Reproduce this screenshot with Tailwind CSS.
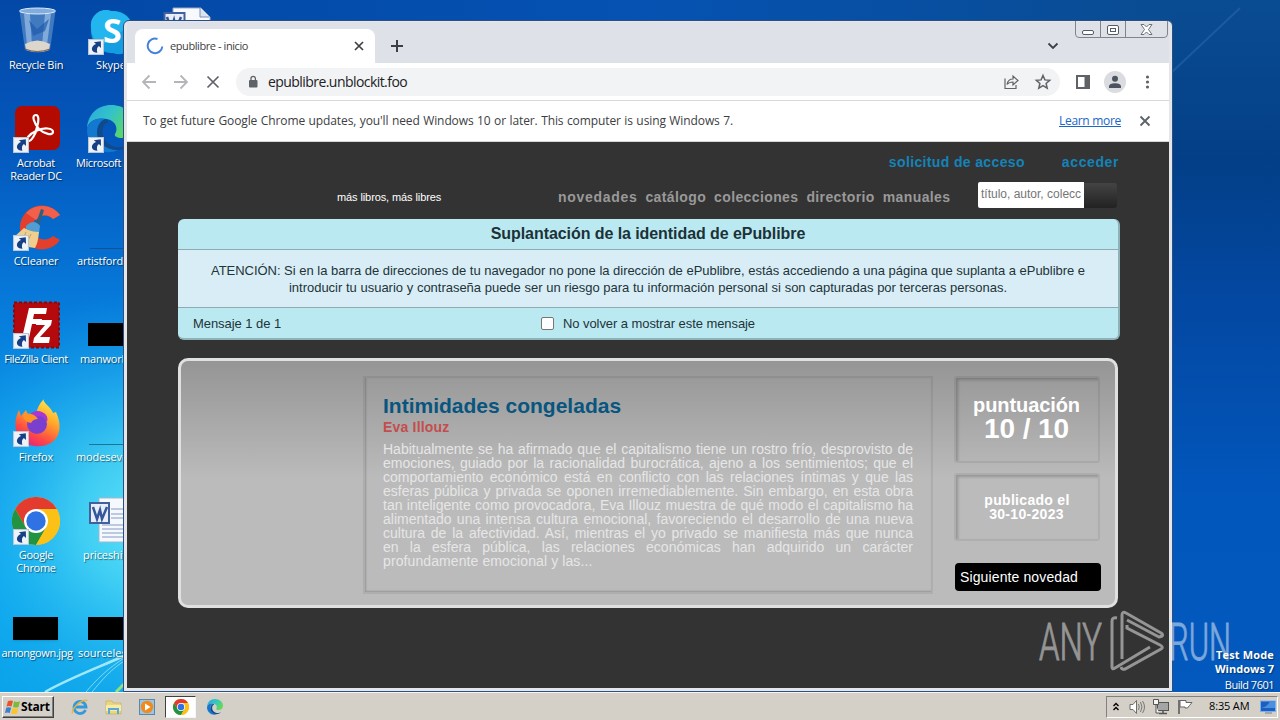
<!DOCTYPE html>
<html lang="es">

<head>
    <meta charset="UTF-8" />
    <meta name="viewport" content="width=device-width, initial-scale=1.0" />
    <title>epublibre - inicio</title>

    <!-- Tailwind CSS -->
    <script src="https://cdn.jsdelivr.net/npm/@tailwindcss/browser@4"></script>
</head>

<body class="overflow-hidden">

    <!-- Shared symbols -->
    <svg class="absolute size-0">
        <defs>
            <linearGradient id="edgeTop" x1="0" y1="0" x2="1" y2=".5">
                <stop offset="0" stop-color="#2ba5df" />
                <stop offset=".5" stop-color="#33c3c9" />
                <stop offset="1" stop-color="#61d95a" />
            </linearGradient>
        </defs>
        <symbol id="shortcut" viewBox="0 0 15 15">
            <rect x=".5" y=".5" width="14" height="14" fill="#eef3f8" stroke="#b9c6d6" />
            <path d="M5.500 3 12 2l.2 6.500-2-2C8.300 8 8 10 8.800 12.800 5 13 2.800 10.500 4 7.800 4.600 6.300 6 5.200 7.600 4.600z" fill="#163f86" />
        </symbol>
        <symbol id="chrome" viewBox="0 0 48 48">
            <circle cx="24" cy="24" r="24" fill="#fbc116" />
            <path d="M24 24 13.600 30 3.200 12A24 24 0 0 1 44.800 12H24z" fill="#e33b2e" />
            <path d="M24 48A24 24 0 0 1 3.200 12l10.400 18L24 36l10.400-6z" fill="#229342" />
            <path d="M24 48 34.400 30A12 12 0 0 0 34.400 18L33 12h11.800A24 24 0 0 1 24 48z" fill="#fbc116" />
            <circle cx="24" cy="24" r="12" fill="#fff" />
            <circle cx="24" cy="24" r="9.700" fill="#2f72e4" />
        </symbol>
        <symbol id="edge" viewBox="0 0 48 48">
            <path d="M0 23C1 9 11 0 24 0c14 0 24 9 24 20 0 8-6 13-13 13-5 0-8-2-7-4 3-4 2-13-8-15C10 12 2 16 0 23z" fill="url(#edgeTop)" />
            <path d="M0 25c1-9 9-13 18-11-7 3-9 10-7 17 3 9 11 14 20 14C17 52 0 42 0 25z" fill="#1378cf" />
            <path d="M18 19c-6 8-1 21 11 23 7 1 13-2 16-7-4 6-9 10-14 10-12 0-20-7-21-16 0-7 3-12 8-15 3 1 5 3 0 5z" fill="#114a8b" />
        </symbol>
    </svg>

    <div class="relative w-[1280px] h-[720px] overflow-hidden flex flex-col font-['Open_Sans','Noto_Sans',sans-serif]">

        <!-- Wallpaper -->
        <svg class="absolute inset-0" width="1280" height="720">
            <defs>
                <linearGradient id="wallTop" x1="0" y1="0" x2="1" y2="0">
                    <stop offset="0" stop-color="#0349a8" />
                    <stop offset=".5" stop-color="#0552b2" />
                    <stop offset="1" stop-color="#0a4c92" />
                </linearGradient>
                <linearGradient id="wallLeft" x1="0" y1="0" x2="0" y2="1">
                    <stop offset="0" stop-color="#0348a6" />
                    <stop offset=".2" stop-color="#0457bc" />
                    <stop offset=".4" stop-color="#0677d8" />
                    <stop offset=".6" stop-color="#0a94e8" />
                    <stop offset=".8" stop-color="#08a4ee" />
                    <stop offset="1" stop-color="#0ba3e9" />
                </linearGradient>
                <linearGradient id="wallRight" x1="0" y1="0" x2="0" y2="1">
                    <stop offset="0" stop-color="#0a4c92" />
                    <stop offset=".22" stop-color="#033f87" />
                    <stop offset=".4" stop-color="#0347a0" />
                    <stop offset=".7" stop-color="#0257bd" />
                    <stop offset="1" stop-color="#0359bd" />
                </linearGradient>
                <radialGradient id="glow" cx="150" cy="520" r="230" gradientUnits="userSpaceOnUse">
                    <stop offset="0" stop-color="#5fe4f8" />
                    <stop offset=".3" stop-color="#4dd9f5" stop-opacity=".8" />
                    <stop offset="1" stop-color="#14a8ef" stop-opacity="0" />
                </radialGradient>
            </defs>
            <rect width="700" height="720" fill="url(#wallLeft)" />
            <rect x="500" width="780" height="720" fill="url(#wallRight)" />
            <rect x="124" width="1048" height="40" fill="url(#wallTop)" />
            <rect width="330" height="720" fill="url(#glow)" />
            <path d="M45 692C72 677 100 667 126 655" stroke="#b9f3ff" stroke-width="2.500" fill="none" opacity=".85" />
            <path d="M86 692C96 680 108 668 126 657M92 692C102 680 112 668 126 660" stroke="#a5edf8" fill="none" opacity=".7" />
            <path d="M116 692 126 682" stroke="#8fe27c" stroke-width="3" />
            <path d="M1172 72 1240 8" stroke="#2f6cae" stroke-width="2" opacity=".5" />
        </svg>

        <!-- Desktop icons -->
        <div class="absolute inset-0 text-[11px] leading-[13px] text-white text-center [text-shadow:1px_1px_1px_#0008]">
            <div class="absolute left-0 top-[6px] w-[72px] flex flex-col items-center">
                <svg class="h-[50px] w-[48px]" viewBox="0 0 48 50">
                    <path d="M7.500 5h36L38 44q-12 5-25 0z" fill="#4d83c4" opacity=".85" />
                    <path d="M12 8h6l2 32h-5zM33 8h6l-4 31h-5z" fill="#a9c9ea" opacity=".6" />
                    <path d="m17 14 8 9 12-10-4 12-12 5z" fill="#1d58aa" opacity=".65" />
                    <path d="M13 38q12-7 25 0l-1 6q-11 4-23 0z" fill="#ddd6cd" />
                    <path d="M13 43q12 5 25 0" stroke="#7a5b44" fill="none" />
                    <ellipse cx="25.500" cy="5" rx="18" ry="3" fill="#81aede" stroke="#dfedf9" />
                </svg>
                <p class="mt-[2px] tracking-[-.3px]">Recycle Bin</p>
            </div>
            <div class="absolute left-0 top-[105px] w-[72px] flex flex-col items-center">
                <div class="relative h-[48px] w-[48px]">
                    <svg viewBox="0 0 48 48">
                        <rect x="3" y="1" width="45" height="44" rx="7" fill="#b30b00" />
                        <path d="M24 10c-5 0-2 8 3 14 5 5 14 7 14 3s-9-5-17-1c-7 3-11 9-8 10s8-7 9-14c2-6 2-12-1-12z" fill="none" stroke="#fff" stroke-width="2.200" />
                    </svg>
                    <svg class="absolute left-[1px] bottom-0 size-[16px]"><use href="#shortcut" /></svg>
                </div>
                <p class="mt-[3px] tracking-[-.3px]">Acrobat<br>Reader DC</p>
            </div>
            <div class="absolute left-0 top-[203px] w-[72px] flex flex-col items-center">
                <div class="relative h-[48px] w-[48px]">
                    <svg viewBox="0 0 48 48">
                        <path d="M48 12A22 22 0 1 0 48 37L41 33A12 12 0 1 1 41 16z" fill="#e2402c" />
                        <path d="M48 12A22 22 0 0 0 14 10L24 17Q33 8 41 16z" fill="#f0604a" />
                        <path d="M29 6l3 1-6 20-4-1z" fill="#2f607f" />
                        <path d="M14 23q8-8 14 0l-1 7-13-3z" fill="#4f9fd4" />
                        <path d="M12 25q7 4 15 4-1 11-4 16Q9 44 2 34z" fill="#f0cf8e" />
                        <path d="m14 29-4 9m9-7-5 11" stroke="#c79d5c" />
                    </svg>
                    <svg class="absolute left-[1px] bottom-0 size-[16px]"><use href="#shortcut" /></svg>
                </div>
                <p class="mt-[3px] tracking-[-.2px]">CCleaner</p>
            </div>
            <div class="absolute left-0 top-[301px] w-[72px] flex flex-col items-center">
                <div class="relative h-[48px] w-[48px]">
                    <svg viewBox="0 0 48 48">
                        <rect x="2" y="1.500" width="45" height="45" fill="#b40a0d" stroke="#8b0708" stroke-width="2" stroke-dasharray="3 2" />
                        <path d="M17 7h18l-1 6H22l-1 5h9l-1 5h-9l-3 14h-7z" fill="#fff" />
                        <path d="M25 19h15l-1 5-11 12h10l-1 6H21l1-5 11-13h-9z" fill="#fff" />
                    </svg>
                    <svg class="absolute left-[1px] bottom-0 size-[16px]"><use href="#shortcut" /></svg>
                </div>
                <p class="mt-[3px] tracking-[-.42px] whitespace-nowrap">FileZilla Client</p>
            </div>
            <div class="absolute left-0 top-[399px] w-[72px] flex flex-col items-center">
                <div class="relative h-[48px] w-[48px]">
                    <svg viewBox="0 0 48 48">
                        <linearGradient id="fox" x1=".8" y1="0" x2=".3" y2="1">
                            <stop offset="0" stop-color="#fff04f" />
                            <stop offset=".4" stop-color="#ffa52a" />
                            <stop offset=".75" stop-color="#ff4a43" />
                            <stop offset="1" stop-color="#e5227c" />
                        </linearGradient>
                        <path d="M31 0c2 6 8 8 10 14l3-1c4 9 5 17 1 25-8 12-27 12-37 2-6-8-6-19-1-29l2 6 5-6 2 5 8-1c1-5 3-10 7-14z" fill="url(#fox)" />
                        <circle cx="25" cy="25" r="10" fill="#7b3fd0" />
                        <path d="M17 16q6-6 13-3 7 3 5 10-4-8-11-5z" fill="#a937d2" />
                        <path d="M11 15q10-2 15 5-5 0-7 4-8-1-8-9z" fill="#ff9424" />
                    </svg>
                    <svg class="absolute left-[1px] bottom-0 size-[16px]"><use href="#shortcut" /></svg>
                </div>
                <p class="mt-[3px] tracking-[-.1px]">Firefox</p>
            </div>
            <div class="absolute left-0 top-[497px] w-[72px] flex flex-col items-center">
                <div class="relative h-[48px] w-[48px]">
                    <svg class="size-[48px]"><use href="#chrome" /></svg>
                    <svg class="absolute left-[1px] bottom-0 size-[16px]"><use href="#shortcut" /></svg>
                </div>
                <p class="mt-[3px] tracking-[-.3px]">Google<br>Chrome</p>
            </div>
            <div class="absolute left-0 top-[617px] w-[74px] flex flex-col items-center">
                <div class="w-[45px] h-[23px] bg-black -ml-[3px] shadow"></div>
                <p class="mt-[6px] tracking-[-.4px]">amongown.jpg</p>
            </div>

            <div class="absolute left-[87px] top-[9px] w-[48px] text-left">
                <div class="relative h-[46px]">
                    <svg class="size-[48px]" viewBox="0 0 48 48">
                        <path d="M4 18A15 15 0 0 1 24 2c13-1 24 8 22 24a15 15 0 0 1-20 18C13 44 3 34 4 18z" fill="#149ee2" />
                        <path d="M4 18A15 15 0 0 1 24 2c10 0 18 5 21 13L14 37Q4 30 4 18z" fill="#22b5ee" />
                    </svg>
                    <span class="absolute left-[16px] top-[3px] text-[34px] leading-[36px] font-bold [text-shadow:none]">S</span>
                    <svg class="absolute left-[1px] bottom-0 size-[16px]"><use href="#shortcut" /></svg>
                </div>
                <p class="mt-[3px] ml-[9px] tracking-[-.1px]">Skype</p>
            </div>
            <div class="absolute left-[76px] top-[105px] w-[60px] text-left">
                <div class="relative h-[48px] ml-[11px]">
                    <svg class="size-[48px]"><use href="#edge" /></svg>
                    <svg class="absolute left-[1px] bottom-0 size-[16px]"><use href="#shortcut" /></svg>
                </div>
                <p class="mt-[3px] tracking-[-.4px]">Microsoft</p>
            </div>
            <div class="absolute left-[77px] top-[248px] w-[60px] text-left">
                <div class="h-px ml-[13px] bg-[#0b558e]"></div>
                <p class="mt-[5px] tracking-[-.2px]">artistford</p>
            </div>
            <div class="absolute left-[80px] top-[323px] w-[60px] text-left">
                <div class="h-[23px] ml-[8px] bg-black"></div>
                <p class="mt-[6px] tracking-[-.2px]">manwork</p>
            </div>
            <div class="absolute left-[76px] top-[444px] w-[60px] text-left">
                <div class="h-px ml-[13px] bg-[#1a7595]"></div>
                <p class="mt-[5px] tracking-[-.1px]">modeseve</p>
            </div>
            <div class="absolute left-[83px] top-[497px] w-[60px] text-left">
                <svg class="ml-[6px] w-[48px] h-[48px]" viewBox="0 0 48 48">
                    <path d="M10 1h36v44H10z" fill="#f5f8fd" stroke="#a8b5cb" />
                    <path d="M22 12h20M22 17h20M22 21h20M13 28h30M13 32h30M13 36h30M13 40h30" stroke="#8599c4" />
                    <rect x="1" y="6" width="19" height="20" fill="#e7eefa" stroke="#40609f" stroke-width="2" />
                    <path d="m4 10 4 12 3-9 2 9 5-12" fill="none" stroke="#34569b" stroke-width="2.500" />
                </svg>
                <p class="mt-[3px] tracking-[-.1px]">priceshit</p>
            </div>
            <div class="absolute left-[78px] top-[617px] w-[60px] text-left">
                <div class="h-[23px] ml-[10px] bg-black"></div>
                <p class="mt-[6px]">sourceles</p>
            </div>
            <svg class="absolute left-[163px] top-[7px] size-[48px]" viewBox="0 0 48 48">
                <path d="M10 1h28l9 9v37H10z" fill="#f7f9fd" stroke="#98a9c8" />
                <path d="M37 1v9h9" fill="#d9e2f2" stroke="#7c90b8" />
                <rect x="1.500" y="6" width="20" height="20" fill="#e7eefa" stroke="#40609f" stroke-width="2" />
                <path d="m4 10 4 12 3-9 2 9 5-12" fill="none" stroke="#34569b" stroke-width="2.500" />
            </svg>
        </div>

        <!-- Browser window -->
        <div class="absolute left-[123px] top-[20px] w-[1050px] h-[672px] rounded-t-[6px] border border-[#2a4f80] bg-[#e4e6ea] px-[3px] pt-px pb-[3px] flex flex-col overflow-hidden">

            <!-- Tab strip -->
            <div class="relative h-[41px] shrink-0 bg-[#dee1e8] flex items-end">
                <div class="ml-[8px] w-[240px] h-[34px] bg-white rounded-t-[8px] flex items-center pl-[11px] pr-[9px]">
                    <svg class="size-[18px]" viewBox="0 0 18 18">
                        <path d="M11.500 2A7.300 7.300 0 1 0 16.300 9.500" fill="none" stroke="#4682dc" stroke-width="2" />
                    </svg>
                    <span class="ml-[6px] text-[11px] text-[#3c4043] tracking-[-.42px] grow">epublibre - inicio</span>
                    <svg class="size-[14px]" viewBox="0 0 14 14"><path d="m3 3 8 8m0-8-8 8" stroke="#3c4043" stroke-width="1.700" /></svg>
                </div>
                <svg class="ml-[15px] mb-[10px] size-[14px]" viewBox="0 0 14 14"><path d="M7 1v12M1 7h12" stroke="#3c4043" stroke-width="2" /></svg>
                <svg class="absolute left-[920px] top-[18px] size-[12px]" viewBox="0 0 12 12"><path d="m1.500 3.500 4.500 4.500 4.500-4.500" fill="none" stroke="#3c4043" stroke-width="1.800" /></svg>
                <div class="absolute left-[948px] -top-[2px] w-[93px] h-[18px] border border-[#80858d] rounded-b-[4px] flex">
                    <div class="w-[25px] border-r border-[#80858d] grid place-items-center pt-[6px]">
                        <div class="w-[12px] h-[5px] rounded-[2px] border border-[#555c66] bg-white"></div>
                    </div>
                    <div class="w-[25px] border-r border-[#80858d] grid place-items-center pt-px">
                        <div class="w-[12px] h-[10px] rounded-[2px] border border-[#555c66] bg-white grid place-items-center">
                            <div class="w-[6px] h-[4px] border border-[#555c66]"></div>
                        </div>
                    </div>
                    <div class="grow grid place-items-center">
                        <svg width="13" height="11" viewBox="0 0 13 11"><path d="M1 .5h3L6.500 3 9 .5h3L8.500 5.500 12 10.500H9L6.500 8 4 10.500H1L4.500 5.500z" fill="#fff" stroke="#6c727b" /></svg>
                    </div>
                </div>
            </div>

            <!-- Toolbar -->
            <div class="h-[37px] shrink-0 bg-white flex items-center text-[#5f6368]">
                <svg class="ml-[14px] size-[16px]" viewBox="0 0 16 16"><path d="M15 8H2m6.500-6.500L2 8l6.500 6.500" fill="none" stroke="#b4b6b9" stroke-width="1.800" /></svg>
                <svg class="ml-[16px] size-[16px]" viewBox="0 0 16 16"><path d="M1 8h13M7.500 1.500 14 8l-6.500 6.500" fill="none" stroke="#b4b6b9" stroke-width="1.800" /></svg>
                <svg class="ml-[16px] size-[16px]" viewBox="0 0 16 16"><path d="m2.500 2.500 11 11m0-11-11 11" stroke="#5f6368" stroke-width="1.700" /></svg>
                <div class="ml-[15px] w-[824px] h-[28px] rounded-full bg-[#f1f3f4] flex items-center pl-[11px] pr-[8px]">
                    <svg class="w-[12px] h-[14px]" viewBox="0 0 12 14">
                        <rect x="2" y="5" width="8.500" height="7.500" rx="1" fill="#5f6368" />
                        <path d="M4 5.500V3.500a2.200 2.200 0 0 1 4.400 0v2" fill="none" stroke="#5f6368" stroke-width="1.300" />
                    </svg>
                    <span class="ml-[9px] grow text-[14px] leading-[18px] tracking-[-.56px] text-[#202124]">epublibre.unblockit.foo</span>
                    <svg class="size-[18px]" viewBox="0 0 18 18"><path d="M3 5.500v10h11V12M5 11.500q1-5.500 6-5.500V3l5 4.500-5 4.500V9q-4 0-6 2.500z" fill="none" stroke="#5f6368" stroke-width="1.200" /></svg>
                    <svg class="ml-[14px] size-[18px]" viewBox="0 0 18 18"><path d="m9 2.500 1.900 4.400 4.800.4-3.600 3.200 1.100 4.700L9 12.700l-4.200 2.500 1.100-4.700-3.600-3.200 4.800-.4z" fill="none" stroke="#5f6368" stroke-width="1.500" /></svg>
                </div>
                <svg class="ml-[16px] size-[14px]" viewBox="0 0 14 14"><path d="M0 0h14v14H0zM2 2v10h6.500V2z" fill="#5f6368" fill-rule="evenodd" /></svg>
                <div class="ml-[14px] size-[22px] rounded-full bg-[#dadce0] grid place-items-center">
                    <svg class="size-[14px]" viewBox="0 0 14 14"><circle cx="7" cy="3.800" r="3" fill="#4c5462" /><path d="M1 13v-1.500C1 9 4.500 8.300 7 8.300s6 .7 6 3.200V13z" fill="#4c5462" /></svg>
                </div>
                <svg class="ml-[18px] w-[7px] h-[14px]" viewBox="0 0 7 14" fill="#5f6368"><circle cx="3.500" cy="2" r="1.600" /><circle cx="3.500" cy="7" r="1.600" /><circle cx="3.500" cy="12" r="1.600" /></svg>
            </div>

            <!-- Infobar -->
            <div class="h-[42px] shrink-0 bg-white border-y border-[#d5d7da] flex items-center pl-[16px] text-[12px] text-[#3c4043]">
                <span class="w-[590px] whitespace-nowrap tracking-[-.1px] [text-align-last:justify]">To get future Google Chrome updates, you'll need Windows 10 or later. This computer is using Windows 7.</span>
                <a class="ml-[326px] w-[62px] whitespace-nowrap underline text-[#1a66c8] tracking-[-.3px]">Learn more</a>
                <svg class="ml-[18px] size-[12px]" viewBox="0 0 12 12"><path d="m1.500 1.500 9 9m0-9-9 9" stroke="#5f6368" stroke-width="1.900" /></svg>
            </div>

            <!-- Page -->
            <main class="grow bg-[#333] pl-[51px] font-['Liberation_Sans',Arial,sans-serif]">
                <header class="w-[942px]">
                    <div class="h-[38px] pt-[11px] flex justify-end gap-[37px] pr-px text-[14px] leading-[18px] font-bold text-[#1583b8]">
                        <a class="tracking-[.36px]">solicitud de acceso</a>
                        <a class="tracking-[.6px]">acceder</a>
                    </div>
                    <div class="h-[39px] flex items-start">
                        <p class="ml-[159px] mt-[10px] w-[221px] text-[11px] leading-[14px] text-white tracking-[-.1px]">más libros, más libres</p>
                        <nav class="mt-[8px] w-[420px] flex gap-[8px] text-[14px] leading-[18px] font-bold text-[#999] tracking-[.38px]">
                            <a class="tracking-[.7px]">novedades</a>
                            <a>catálogo</a>
                            <a>colecciones</a>
                            <a>directorio</a>
                            <a>manuales</a>
                        </nav>
                        <div class="mt-[2px] flex">
                            <div class="w-[106px] h-[26px] rounded-l-[2px] bg-white pl-[3px] text-[12px] leading-[25px] text-[#757575] overflow-hidden whitespace-nowrap">título, autor, colecc</div>
                            <div class="w-[33px] h-[25px] mt-px rounded-r-[3px] bg-linear-to-b from-[#444] to-[#222]"></div>
                        </div>
                    </div>
                </header>

                <section class="w-[942px] h-[121px] rounded-[6px] overflow-hidden bg-[#bbe9f2] border-b-2 border-r-2 border-[#8fb2b9] text-[#223438]">
                    <h2 class="h-[31px] border-b border-[#8fabb2] text-center text-[16px] leading-[29px] font-bold text-[#1c3237] tracking-[-.07px]">Suplantación de la identidad de ePublibre</h2>
                    <div class="h-[58px] pt-[12px] bg-[#d9edf6] border-b border-[#8fabb2] text-[13px] leading-[17px]">
                        <p class="ml-[33px] w-[874px] whitespace-nowrap tracking-[-.04px] [text-align-last:justify]">ATENCIÓN: Si en la barra de direcciones de tu navegador no pone la dirección de ePublibre, estás accediendo a una página que suplanta a ePublibre e</p>
                        <p class="ml-[111px] w-[718px] whitespace-nowrap tracking-[-.02px] [text-align-last:justify]">introducir tu usuario y contraseña puede ser un riesgo para tu información personal si son capturadas por terceras personas.</p>
                    </div>
                    <div class="h-[31px] flex items-center pl-[15px] text-[13px]">
                        <span class="w-[348px] tracking-[-.06px]">Mensaje 1 de 1</span>
                        <span class="size-[13px] rounded-[2px] bg-white border border-[#767676]"></span>
                        <span class="ml-[9px] w-[192px] whitespace-nowrap tracking-[-.08px] [text-align-last:justify]">No volver a mostrar este mensaje</span>
                    </div>
                </section>

                <section class="mt-[18px] w-[940px] h-[250px] rounded-[10px] border-[3px] border-[#e0e0e0] bg-linear-to-b from-[#959595] to-[#bbb] to-[48%] flex">
                    <article class="ml-[182px] mt-[15px] w-[570px] h-[218px] px-[18px] pt-[17px] border-[2px] border-[#0001] shadow-[inset_1px_-1px_2px_#0003]">
                        <h1 class="text-[21px] leading-[22px] font-bold text-[#08557f]">Intimidades congeladas</h1>
                        <h2 class="text-[14px] leading-[20px] font-bold text-[#c44d4d] tracking-[.2px]">Eva Illouz</h2>
                        <div class="mt-[5px] w-[530px] text-[14px] leading-[14px] text-[#e6e6e6] whitespace-nowrap [text-align-last:justify]">
                            <p>Habitualmente se ha afirmado que el capitalismo tiene un rostro frío, desprovisto de</p>
                            <p>emociones, guiado por la racionalidad burocrática, ajeno a los sentimientos; que el</p>
                            <p>comportamiento económico está en conflicto con las relaciones íntimas y que las</p>
                            <p>esferas pública y privada se oponen irremediablemente. Sin embargo, en esta obra</p>
                            <p>tan inteligente como provocadora, Eva Illouz muestra de qué modo el capitalismo ha</p>
                            <p>alimentado una intensa cultura emocional, favoreciendo el desarrollo de una nueva</p>
                            <p>cultura de la afectividad. Así, mientras el yo privado se manifiesta más que nunca</p>
                            <p>en la esfera pública, las relaciones económicas han adquirido un carácter</p>
                            <p class="[text-align-last:left] tracking-[.1px]">profundamente emocional y las...</p>
                        </div>
                    </article>
                    <aside class="ml-[21px] mt-[15px] w-[147px] text-center text-white font-bold">
                        <div class="w-[146px] h-[87px] pt-[16px] pr-[1px] border-[2px] border-[#0001] rounded-[3px] shadow-[inset_2px_2px_3px_#0003]">
                            <p class="text-[20px] leading-[22px] tracking-[-.1px]">puntuación</p>
                            <p class="text-[28px] leading-[25px] tracking-[-.1px]">10 / 10</p>
                        </div>
                        <div class="mt-[10px] w-[146px] h-[68px] pt-[18px] border-[2px] border-[#0001] rounded-[3px] shadow-[inset_2px_2px_3px_#0003] text-[14px] leading-[14px]">
                            <p class="tracking-[.3px]">publicado el</p>
                            <p class="tracking-[.3px] pr-px">30-10-2023</p>
                        </div>
                        <div class="mt-[22px] ml-[1px] w-[146px] h-[28px] rounded-[4px] bg-black pl-[5px] text-left text-[14px] leading-[28px] font-normal tracking-[.12px]">Siguiente novedad</div>
                    </aside>
                </section>
            </main>
        </div>

        <!-- Watermark -->
        <svg class="absolute left-[1035px] top-[605px] w-[210px] h-[70px]" viewBox="0 0 210 70" opacity=".48">
            <g font-family="Roboto, 'Open Sans', sans-serif" font-weight="300" font-size="52" fill="#fff" stroke="#fff" stroke-width=".9">
                <text x="4" y="54.500" textLength="63" lengthAdjust="spacingAndGlyphs">ANY</text>
                <text x="134" y="54.500" textLength="62" lengthAdjust="spacingAndGlyphs">RUN</text>
            </g>
            <path d="M82 13q-5-1-5 3v46q0 3 3 1l35-21M87 54V10q0-4 4-2l35 20q4 3-2 4L92 15M92 20v3l33 17q4 2 1 4l-36 20q-3 1-4-2" fill="none" stroke="#fff" stroke-width="3" />
        </svg>

        <div class="absolute right-[6px] top-[648px] text-right text-white text-[11px] leading-[14px] [text-shadow:1px_1px_1px_#0006]">
            <p class="font-bold tracking-[.15px]">Test Mode</p>
            <p class="font-bold">Windows 7</p>
            <p class="mt-[2px] tracking-[-.5px]">Build 7601</p>
        </div>

        <!-- Taskbar -->
        <footer class="relative mt-auto h-[28px] bg-[#d4d0c8] border-t border-[#f5f4f1] flex items-center">
            <div class="ml-[2px] w-[52px] h-[22px] border border-t-white border-l-white border-b-[#404040] border-r-[#404040] shadow-[inset_-1px_-1px_#808080] flex items-center pl-[2px]">
                <svg class="size-[16px]" viewBox="0 0 16 16">
                    <path d="M3 2q3-1 5 0L6.500 7.500Q4 6.500 1.500 7.500z" fill="#e8552b" />
                    <path d="M9 2.300q3 1.200 6 0L13.500 8q-3 1-5.500 0z" fill="#7dba3c" />
                    <path d="M1.200 8.700q2.500-1 5 0L4.700 14Q2.500 13 0 14z" fill="#3a7fd1" />
                    <path d="M7.500 9q3 1 5.700 0L12 14.500q-3 1-6 0z" fill="#f8c62c" />
                </svg>
                <span class="text-[12px] font-bold text-black tracking-[-.2px]">Start</span>
            </div>
            <svg class="ml-[17px] size-[18px]" viewBox="0 0 18 18">
                <path d="M14.500 12A6 6 0 1 1 15 9H4" fill="none" stroke="#3398dc" stroke-width="2.800" />
                <path d="M1.500 15.500C0 11 10 1 16.500 2.500" fill="none" stroke="#e9b93b" stroke-width="1.400" />
            </svg>
            <svg class="ml-[16px] size-[18px]" viewBox="0 0 18 18">
                <path d="M1 3h6l1 2h8v11H1z" fill="#ecd67c" stroke="#c2a751" stroke-width=".6" />
                <path d="M1 7h15v6H1z" fill="#f7eba8" />
                <path d="M4 16v-5h9v5" fill="none" stroke="#5aa7dc" stroke-width="2" />
            </svg>
            <svg class="ml-[16px] size-[16px]" viewBox="0 0 16 16">
                <rect x=".5" y=".5" width="15" height="15" fill="#9cc4e4" stroke="#5b87ab" />
                <circle cx="8" cy="8" r="6.200" fill="#f08a1d" />
                <path d="M6 4.500 11.500 8 6 11.500z" fill="#fff" />
            </svg>
            <div class="ml-[10px] w-[31px] h-[22px] bg-white border border-t-[#404040] border-l-[#404040] border-b-[#f5f5f5] border-r-[#f5f5f5] grid place-items-center">
                <svg class="size-[16px]"><use href="#chrome" /></svg>
            </div>
            <svg class="ml-[11px] size-[16px]"><use href="#edge" /></svg>

            <div class="ml-auto mr-[2px] w-[172px] h-[22px] border border-t-[#808080] border-l-[#808080] border-b-white border-r-white flex items-center pl-[5px]">
                <svg class="w-[8px] h-[10px]" viewBox="0 0 8 10"><path d="m1.500 4 2.500-2.500L6.500 4m-5 4L4 5.500 6.500 8" fill="none" stroke="#000" stroke-width="1.400" /></svg>
                <svg class="ml-[8px] size-[18px]" viewBox="0 0 18 18">
                    <path d="M2 6.500h3l3.500-4v13l-3.500-4H2z" fill="#fff" stroke="#6d6d6d" />
                    <path d="M10.500 6q1.500 3 0 6m2-8q3 5 0 10m2-11q4 6 0 12" fill="none" stroke="#777" />
                </svg>
                <svg class="ml-[6px] size-[18px]" viewBox="0 0 18 18">
                    <rect x="5.500" y="4.500" width="11" height="8" fill="#a5a5a5" stroke="#555" />
                    <path d="M7 15.500h8M11 13v2" stroke="#555" stroke-width="1.500" />
                    <path d="M1.500 1.500h5v5h-5zM4 7v8h3" fill="#f5f5f5" stroke="#555" />
                </svg>
                <svg class="ml-[6px] size-[18px]" viewBox="0 0 18 18">
                    <path d="M3 2v14" stroke="#555" stroke-width="1.500" />
                    <path d="M4 2.500h6v2h6l-2.500 3-2 2.500H9V9H4z" fill="#fff" stroke="#666" />
                </svg>
                <span class="ml-[15px] w-[41px] text-[11px] tracking-[-.15px] text-black whitespace-nowrap">8:35 AM</span>
                <svg class="ml-[10px] w-[16px] h-[14px]" viewBox="0 0 16 14">
                    <rect x=".5" y="1" width="15" height="10.500" fill="#1d5fc0" stroke="#7db0ea" />
                    <path d="M1 8q6-1 9-6.500h5V8z" fill="#4a91e0" />
                    <path d="M5 13h7" stroke="#6d7f96" />
                </svg>
            </div>
        </footer>
    </div>
</body>

</html>
